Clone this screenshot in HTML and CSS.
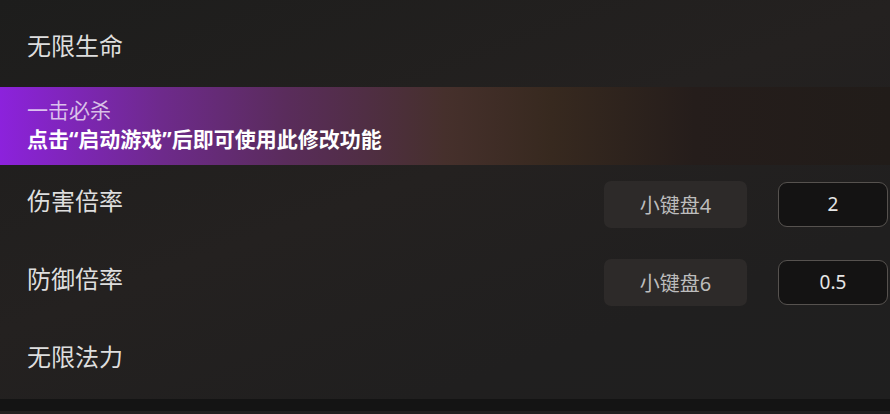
FILE: index.html
```html
<!DOCTYPE html>
<html lang="zh">
<head>
    <meta charset="UTF-8">
    <meta name="viewport" content="width=device-width, initial-scale=1.0">
    <title>修改器</title>
    <link rel="stylesheet" href="styles.css">
</head>
<body>
    <div class="list">
        <div class="row row-first">
            <span class="label">无限生命</span>
        </div>

        <div class="row banner">
            <div class="banner-title">一击必杀</div>
            <div class="banner-tip">点击“启动游戏”后即可使用此修改功能</div>
        </div>

        <div class="row">
            <span class="label">伤害倍率</span>
            <div class="controls">
                <button class="key">小键盘4</button>
                <input class="value" type="text" value="2">
            </div>
        </div>

        <div class="row">
            <span class="label">防御倍率</span>
            <div class="controls">
                <button class="key">小键盘6</button>
                <input class="value" type="text" value="0.5">
            </div>
        </div>

        <div class="row">
            <span class="label">无限法力</span>
        </div>
    </div>
    <div class="footer"></div>
</body>
</html>
```

FILE: styles.css
```css
body {
    margin: 0;
    height: 414px;
    overflow: hidden;
    font-family: "Noto Sans", "Noto Sans CJK SC", sans-serif;
    background: linear-gradient(160deg, #1d1d1c 0%, #242120 45%, #201f1f 75%, #1f1f1f 100%);
    color: #dcdcdc;
}
.list {
    height: 399px;
}
.row {
    display: flex;
    align-items: center;
    justify-content: space-between;
    height: 78px;
    padding-left: 27px;
    padding-right: 2px;
    box-sizing: border-box;
}
.row-first {
    height: 87px;
    padding-top: 4px;
}
.label {
    font-size: 24px;
    line-height: 30px;
    margin-top: -6px;
    color: #dedede;
}
.row-first .label {
    margin-top: 0;
}
.banner {
    flex-direction: column;
    align-items: flex-start;
    justify-content: center;
    padding-bottom: 2px;
    background: linear-gradient(90deg, #8c22dc 0%, #6e2a8c 18%, #5a2c5c 32%, #46302c 50%, #37291f 62%, #251d1b 78%, #211c19 100%);
}
.banner-title {
    font-size: 21px;
    line-height: 29px;
    color: rgba(255, 255, 255, 0.72);
}
.banner-tip {
    font-size: 21px;
    line-height: 29px;
    font-weight: bold;
    color: #ffffff;
}
.controls {
    display: flex;
    align-items: center;
    gap: 31px;
}
.key {
    width: 143px;
    height: 47px;
    border: none;
    border-radius: 7px;
    background-color: #2d2a29;
    color: #bdbdbd;
    font-family: inherit;
    font-size: 20px;
    cursor: pointer;
}
.value {
    width: 110px;
    height: 45px;
    box-sizing: border-box;
    border: 1px solid #56524f;
    border-radius: 9px;
    background-color: #141313;
    color: #e6e6e6;
    font-family: inherit;
    font-size: 19px;
    text-align: center;
    outline: none;
}
.footer {
    height: 12px;
    background-color: #141414;
}
```
